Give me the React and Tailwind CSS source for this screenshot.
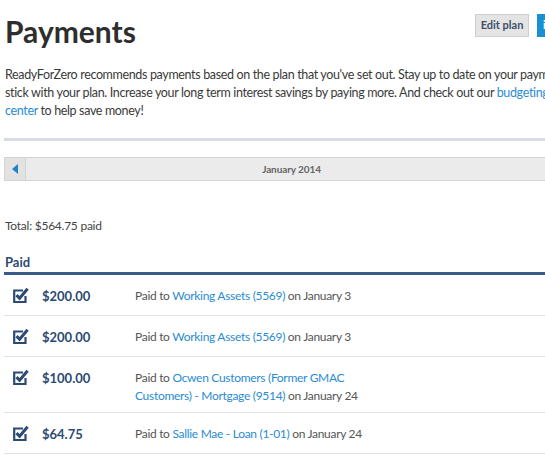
import React from "react";

function Check() {
  return (
    <svg width="17" height="17" viewBox="0 0 17 17" className="shrink-0">
      <path d="M11 3.5 H2.2 V15 H13.5 V9" fill="none" stroke="#2d4a72" strokeWidth="2.2" />
      <path d="M4.5 8.2 L7.6 11.2 L15.6 1.8" fill="none" stroke="#2d4a72" strokeWidth="3" strokeLinejoin="miter" />
    </svg>
  );
}

const rows = [
  { amt: "$200.00", h: "h-[41px]", body: (<>Paid to <a className="text-[#2a8bd2]">Working Assets (5569)</a> on January 3</>) },
  { amt: "$200.00", h: "h-[41px]", body: (<>Paid to <a className="text-[#2a8bd2]">Working Assets (5569)</a> on January 3</>) },
  { amt: "$100.00", h: "h-[56px]", body: (<>Paid to <a className="text-[#2a8bd2]">Ocwen Customers (Former GMAC<br />Customers) - Mortgage (9514)</a> on January 24</>) },
  { amt: "$64.75", h: "h-[41px]", body: (<>Paid to <a className="text-[#2a8bd2]">Sallie Mae - Loan (1-01)</a> on January 24</>) },
];

export default function App() {
  return (
    <div className="w-[545px] h-[460px] overflow-hidden bg-white font-['Lato',sans-serif] text-[#333]">
      <div className="w-[575px] ml-[4px]">
        <div className="flex items-start h-[66px]">
          <h1 className="pl-[1px] pt-[13px] text-[30px] leading-[36px] font-bold text-[#2e2e2e]">Payments</h1>
          <div className="ml-auto mt-[14px] flex gap-[8px]">
            <div className="h-[23px] w-[54px] flex items-center justify-center bg-[#e4e4e4] border border-[#cfcfcf] text-[11px] font-bold text-[#3d4f6a]">Edit plan</div>
            <div className="h-[23px] w-[42px] flex items-center pl-[6px] bg-[#1c8fd0] text-[11px] font-bold text-white">i</div>
          </div>
        </div>
        <p className="pl-[1px] text-[12.5px] tracking-[-0.35px] leading-[18px] text-[#3a3a3a] whitespace-nowrap">
          ReadyForZero recommends payments based on the plan that you've set out. Stay up to date on your payments and<br />
          stick with your plan. Increase your long term interest savings by paying more. And check out our <a className="text-[#2a8bd2]">budgeting</a><br />
          <a className="text-[#2a8bd2]">center</a> to help save money!
        </p>
        <div className="mt-[18px] h-[3px] bg-[#d5dce6]" />
        <div className="mt-[16px] h-[24px] flex bg-[#ebebeb] border border-[#d3d3d3]">
          <div className="w-[21px] flex items-center justify-center border-r border-[#d3d3d3] bg-[#e2e2e2]">
            <svg width="6" height="10" viewBox="0 0 6 10"><path d="M6 0 L0 5 L6 10 Z" fill="#1f84c6" /></svg>
          </div>
          <div className="flex-1 flex items-center justify-center text-[10px] tracking-[-0.1px] font-bold text-[#666]">January 2014</div>
          <div className="w-[21px] border-l border-[#d3d3d3] bg-[#e2e2e2]" />
        </div>
        <div className="mt-[36px] pl-[1px] text-[12px] tracking-[-0.25px] leading-[18px] text-[#444]">Total: $564.75 paid</div>
        <div className="mt-[18px] pl-[1px] text-[13px] leading-[18px] font-bold text-[#2d4a72] h-[19px]">Paid</div>
        <div className="h-[3px] bg-[#3a5a88]" />
        {rows.map((r, i) => (
          <div key={i} className={`${r.h} flex items-start pt-[11px] border-b border-[#e3e3e3]`}>
            <div className="w-[38px] pl-[8px] pt-[1px]"><Check /></div>
            <div className="w-[93px] text-[13px] leading-[20px] font-bold text-[#2d4a72]">{r.amt}</div>
            <div className="text-[12px] tracking-[-0.3px] leading-[18px] text-[#555] pt-[1px]">{r.body}</div>
          </div>
        ))}
      </div>
    </div>
  );
}
